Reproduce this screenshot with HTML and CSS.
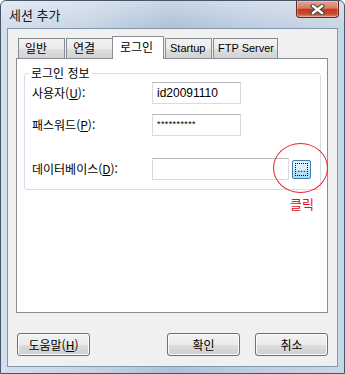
FILE: index.html
```html
<!doctype html>
<html lang="ko">
  <head>
    <meta charset="UTF-8" />
    <meta name="viewport" content="width=device-width, initial-scale=1" />
    <title>세션 추가</title>
    <link rel="stylesheet" href="styles.css">
  </head>
  <body>
    <div class="window">
      <div class="titlebar">
        <span class="title">세션 추가</span>
        <button class="close" type="button" aria-label="닫기">
          <svg width="15" height="11" viewBox="0 0 15 11">
            <path d="M3 2 L12 9 M12 2 L3 9" stroke="#3f3f3f" stroke-width="4.4" stroke-linecap="square" fill="none" />
            <path d="M3 2 L12 9 M12 2 L3 9" stroke="#ffffff" stroke-width="2.4" stroke-linecap="square" fill="none" />
          </svg>
        </button>
      </div>

      <div class="client">
        <div class="tabs">
          <div class="tab">일반</div>
          <div class="tab">연결</div>
          <div class="tab active">로그인</div>
          <div class="tab latin">Startup</div>
          <div class="tab latin">FTP Server</div>
        </div>

        <div class="panel">
          <fieldset class="group">
            <legend>로그인 정보</legend>
            <div class="row first">
              <label class="field-label" for="user">사용자(<u>U</u>):</label>
              <input class="field" id="user" type="text" value="id20091110" />
            </div>
            <div class="row second">
              <label class="field-label" for="pass">패스워드(<u>P</u>):</label>
              <input class="field pass" id="pass" type="text" value="**********" />
            </div>
            <div class="row third">
              <label class="field-label" for="db">데이터베이스(<u>D</u>):</label>
              <input class="field wide" id="db" type="text" value="" />
              <button class="browse" type="button"><span class="browse-focus">...</span></button>
            </div>
          </fieldset>

          <div class="mark-circle"></div>
          <div class="mark-text">클릭</div>
        </div>

        <div class="footer">
          <button class="btn" type="button">도움말(<u>H</u>)</button>
          <button class="btn ok" type="button">확인</button>
          <button class="btn cancel" type="button">취소</button>
        </div>
      </div>
    </div>
  </body>
</html>
```

FILE: styles.css
```css
html,
body {
  margin: 0;
}
body {
  width: 345px;
  height: 374px;
  overflow: hidden;
  background: #ffffff;
  font-family: "Noto Sans CJK KR", "Noto Sans", sans-serif;
  font-size: 12px;
  color: #000;
}
.window {
  height: 374px;
  box-sizing: border-box;
  display: flex;
  flex-direction: column;
  border: 1px solid #45566a;
  border-radius: 6px 6px 0 0;
  background: linear-gradient(90deg, #d3dfeb 0%, #c6d5e4 25%, #adc1d7 50%, #bccce0 70%, #c9d6e4 100%);
}
.titlebar {
  height: 27px;
  display: flex;
  align-items: flex-start;
  background: linear-gradient(180deg, rgba(255, 255, 255, 0.35), rgba(255, 255, 255, 0));
  border-radius: 5px 5px 0 0;
}
.title {
  margin: 5px 0 0 8px;
  line-height: 17px;
  font-size: 13px;
  color: #1a1a1a;
}
.close {
  margin-left: auto;
  margin-right: 5px;
  width: 43px;
  height: 17px;
  padding: 0;
  display: flex;
  align-items: center;
  justify-content: center;
  border: 1px solid #6b2a1e;
  border-top: none;
  border-radius: 0 0 4px 4px;
  background: linear-gradient(180deg, #e6a394 0%, #d97b65 45%, #c13a1f 52%, #c94a2e 80%, #e28a6f 100%);
  box-shadow: inset 0 0 0 1px rgba(255, 255, 255, 0.3);
}
.close svg {
  display: block;
}
.client {
  flex: 1;
  display: flex;
  flex-direction: column;
  margin: 0 6px 6px;
  padding: 7px 9px 10px 8px;
  border: 1px solid #8496ab;
  background: #f0f0f0;
}
.tabs {
  display: flex;
  align-items: flex-end;
  height: 23px;
  margin-bottom: -1px;
  padding-left: 2px;
  position: relative;
  z-index: 1;
}
.tab {
  box-sizing: border-box;
  min-width: 47px;
  height: 20px;
  margin: 0 1px 1px 0;
  padding: 0 6px;
  line-height: 18px;
  border: 1px solid #898c95;
  border-bottom: none;
  background: linear-gradient(180deg, #f3f3f3 0%, #ebebeb 50%, #dedede 55%, #d2d2d2 100%);
  white-space: nowrap;
}
.tab.latin {
  padding: 0 3px 0 4px;
  font-family: "Liberation Sans", Arial, sans-serif;
  font-size: 11px;
  line-height: 19px;
}
.tab.active {
  min-width: 52px;
  height: 23px;
  margin: 0 1px 0 -2px;
  padding: 0 7px;
  line-height: 19px;
  background: #ffffff;
  position: relative;
  z-index: 2;
}
.panel {
  flex: 1;
  position: relative;
  padding: 0 6px 0 7px;
  border: 1px solid #898c95;
  background: #ffffff;
}
.group {
  margin: 7px 0 0;
  padding: 0 0 9px;
  min-width: 0;
  border: 1px solid #d5dfe5;
  border-radius: 3px;
}
.group legend {
  margin-left: 4px;
  padding: 0 2px;
  line-height: 14px;
}
.row {
  display: flex;
  align-items: center;
  height: 22px;
}
.row.first {
  margin-top: 2px;
}
.row.second {
  margin-top: 10px;
}
.row.third {
  margin-top: 22px;
}
.field-label {
  width: 120px;
  padding-left: 7px;
  line-height: 16px;
}
.field {
  box-sizing: border-box;
  width: 89px;
  height: 22px;
  margin: 0;
  padding: 0 4px;
  border: 1px solid #d8dbe0;
  border-top-color: #b5b8bf;
  background: #fff;
  font-family: "Liberation Sans", Arial, sans-serif;
  font-size: 12px;
  color: #000;
}
.field.pass {
  font-size: 9px;
  letter-spacing: 0.4px;
  padding-bottom: 2px;
}
.field.wide {
  width: 137px;
}
.browse {
  box-sizing: border-box;
  width: 19px;
  height: 19px;
  margin-left: 3px;
  padding: 2px;
  border: 1px solid #3c7fb1;
  border-radius: 2px;
  background: linear-gradient(180deg, #eaf6fd 0%, #d9f0fc 50%, #bee6fd 51%, #a7d9f5 100%);
}
.browse-focus {
  display: block;
  height: 100%;
  box-sizing: border-box;
  border: 1px dotted #000;
  font-family: "Liberation Sans", Arial, sans-serif;
  font-size: 10px;
  line-height: 9px;
  text-align: center;
  color: #000;
}
.mark-circle {
  position: absolute;
  left: 256px;
  top: 84px;
  width: 53px;
  height: 48px;
  border: 1px solid #e8252b;
  border-radius: 50%;
}
.mark-text {
  position: absolute;
  left: 273px;
  top: 137px;
  line-height: 16px;
  font-size: 13px;
  color: #e3101c;
}
.footer {
  display: flex;
  margin-top: 20px;
}
.btn {
  box-sizing: border-box;
  width: 73px;
  height: 23px;
  margin: 0 0 0 1px;
  padding: 0;
  border: 1px solid #707070;
  border-radius: 3px;
  background: linear-gradient(180deg, #f2f2f2 0%, #ebebeb 50%, #dddddd 51%, #cfcfcf 100%);
  box-shadow: inset 0 0 0 1px #fbfbfb;
  font-family: inherit;
  font-size: 12px;
  color: #000;
}
.btn.ok {
  margin-left: auto;
}
.btn.cancel {
  margin-left: 15px;
}
```
